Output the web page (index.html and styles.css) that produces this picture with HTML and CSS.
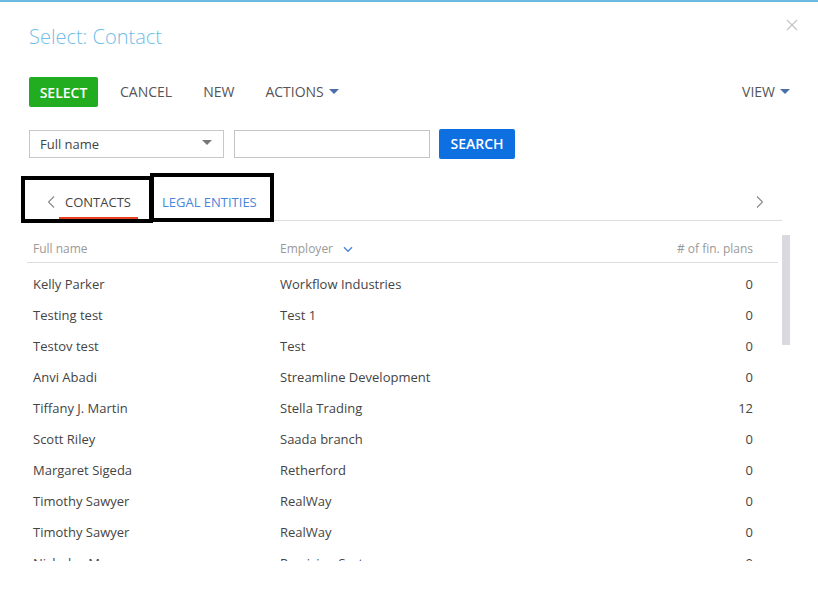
FILE: index.html
```html
<!DOCTYPE html>
<html>
<head>
<meta charset="utf-8">
<link rel="stylesheet" href="styles.css">
</head>
<body>
<div class="dialog">
  <div class="title-row">
    <h1 class="title">Select: Contact</h1>
    <svg class="close" width="12" height="12" viewBox="0 0 12 12"><path d="M1 1L11 11M11 1L1 11" stroke="#c4c4c4" stroke-width="1.2" fill="none"/></svg>
  </div>
  <div class="toolbar">
    <button class="btn-select">SELECT</button>
    <span class="tb-item">CANCEL</span>
    <span class="tb-item">NEW</span>
    <span class="tb-item">ACTIONS <span class="caret"></span></span>
    <span class="tb-spacer"></span>
    <span class="tb-item view">VIEW <span class="caret"></span></span>
  </div>
  <div class="filter">
    <div class="select-box">Full name <span class="caret gray"></span></div>
    <div class="input-box"></div>
    <button class="btn-search">SEARCH</button>
  </div>
  <div class="tabs">
    <svg class="chev" width="8" height="12" viewBox="0 0 8 12"><path d="M7 0.5L1.5 6L7 11.5" stroke="#888" stroke-width="1.1" fill="none"/></svg>
    <span class="tab active">CONTACTS</span>
    <span class="tab link">LEGAL ENTITIES</span>
    <span class="tabs-spacer"></span>
    <svg class="chev right" width="8" height="12" viewBox="0 0 8 12"><path d="M1 0.5L6.5 6L1 11.5" stroke="#888" stroke-width="1.1" fill="none"/></svg>
  </div>
  <div class="grid-wrap">
    <div class="grid">
      <div class="grid-head">
        <span class="c-name">Full name</span>
        <span class="c-emp">Employer <svg class="sort" width="10" height="7" viewBox="0 0 10 7"><path d="M1 1.2L5 5.2L9 1.2" stroke="#4a86dc" stroke-width="1.4" fill="none"/></svg></span>
        <span class="c-num">#&nbsp;of fin. plans</span>
      </div>
      <div class="grid-body">
        <div class="row"><span class="c-name">Kelly Parker</span><span class="c-emp">Workflow Industries</span><span class="c-num">0</span></div>
        <div class="row"><span class="c-name">Testing test</span><span class="c-emp">Test 1</span><span class="c-num">0</span></div>
        <div class="row"><span class="c-name">Testov test</span><span class="c-emp">Test</span><span class="c-num">0</span></div>
        <div class="row"><span class="c-name">Anvi Abadi</span><span class="c-emp">Streamline Development</span><span class="c-num">0</span></div>
        <div class="row"><span class="c-name">Tiffany J. Martin</span><span class="c-emp">Stella Trading</span><span class="c-num">12</span></div>
        <div class="row"><span class="c-name">Scott Riley</span><span class="c-emp">Saada branch</span><span class="c-num">0</span></div>
        <div class="row"><span class="c-name">Margaret Sigeda</span><span class="c-emp">Retherford</span><span class="c-num">0</span></div>
        <div class="row"><span class="c-name">Timothy Sawyer</span><span class="c-emp">RealWay</span><span class="c-num">0</span></div>
        <div class="row"><span class="c-name">Timothy Sawyer</span><span class="c-emp">RealWay</span><span class="c-num">0</span></div>
        <div class="row"><span class="c-name">Nicholas Moore</span><span class="c-emp">Precision Systems</span><span class="c-num">0</span></div>
      </div>
    </div>
    <div class="scroll"><div class="thumb"></div></div>
  </div>
</div>
<div class="mark mark-1"></div>
<div class="mark mark-2"></div>
</body>
</html>
```
FILE: styles.css
```css
* { box-sizing: border-box; }
html, body { margin: 0; padding: 0; background: #fff; }
body {
  font-family: "Open Sans", "Liberation Sans", sans-serif;
  font-size: 13px;
  color: #444;
  width: 818px;
  height: 591px;
  overflow: hidden;
  position: relative;
}
.dialog {
  border-top: 2px solid #6cb9e4;
  height: 591px;
}
.title-row {
  display: flex;
  justify-content: space-between;
  align-items: flex-start;
  padding: 22px 20px 0 29px;
  height: 75px;
}
.title {
  margin: 0;
  font-weight: 300;
  font-size: 20px;
  line-height: 26px;
  color: #6fbde8;
}
.close { margin-top: -5px; }
.toolbar {
  display: flex;
  align-items: center;
  height: 30px;
  padding: 0 28px 0 29px;
  font-size: 14px;
  color: #555;
}
.btn-select {
  background: #22ac1f;
  color: #fff;
  border: 0;
  border-radius: 2px;
  font-family: inherit;
  font-size: 14px;
  font-weight: 600;
  height: 30px;
  width: 69px;
  padding: 0;
  margin-right: 22px;
}
.tb-item { margin-right: 31px; display: flex; align-items: center; line-height: 18px; }
.tb-item.view { margin-right: 0; }
.tb-spacer { flex: 1; }
.caret {
  display: inline-block;
  width: 0; height: 0;
  border-left: 5px solid transparent;
  border-right: 5px solid transparent;
  border-top: 5px solid #4a6ea8;
  margin-left: 5px;
  margin-top: -2px;
}
.caret.gray { border-top-color: #777; margin-left: auto; }
.filter {
  display: flex;
  align-items: center;
  margin-top: 22px;
  padding-left: 29px;
  height: 29px;
}
.select-box {
  width: 195px;
  height: 28px;
  border: 1px solid #c8c8c8;
  display: flex;
  align-items: center;
  padding: 0 11px 0 10px;
  font-size: 13px;
  color: #444;
}
.input-box {
  width: 196px;
  height: 28px;
  border: 1px solid #c4c4c4;
  margin-left: 10px;
}
.btn-search {
  margin-left: 9px;
  width: 76px;
  height: 30px;
  border: 0;
  border-radius: 2px;
  background: #0d6fe0;
  color: #fff;
  font-family: inherit;
  font-size: 14px;
  font-weight: 600;
  padding: 0;
}
.tabs {
  display: flex;
  align-items: center;
  margin: 25px 36px 0 27px;
  height: 38px;
  border-bottom: 1px solid #ddd;
  position: relative;
}
.chev { margin-left: 20px; margin-right: 10px; }
.chev.right { margin: 0 18px 0 0; }
.tab { font-size: 13px; line-height: 18px; }
.tab.active { position: relative; color: #444; }
.tab.active::after {
  content: "";
  position: absolute;
  left: -6px; right: -7px;
  bottom: -8px;
  height: 2px;
  background: #e8401f;
}
.tab.link { color: #4a86dc; margin-left: 31px; }
.tabs-spacer { flex: 1; }
.grid-wrap {
  display: flex;
  padding-left: 27px;
}
.grid { width: 751px; }
.grid-head {
  display: flex;
  align-items: center;
  height: 42px;
  padding-top: 14px;
  border-bottom: 1px solid #dcdcdc;
  color: #999;
  font-size: 12px;
}
.grid-body {
  padding-top: 5px;
  height: 298px;
  overflow: hidden;
}
.row {
  display: flex;
  align-items: center;
  height: 31px;
  font-size: 13px;
  color: #444;
}
.c-name { width: 253px; padding-left: 6px; }
.c-emp { width: 300px; display: flex; align-items: center; }
.c-num { flex: 1; text-align: right; padding-right: 25px; }
.sort { margin-left: 10px; margin-top: 1px; }
.scroll { width: 8px; margin-left: 4px; }
.thumb {
  margin-top: 14px;
  height: 110px;
  background: #d9d9df;
}
.mark {
  position: absolute;
  border: 4px solid #000;
}
.mark-1 { left: 21px; top: 176px; width: 132px; height: 47px; }
.mark-2 { left: 150px; top: 173px; width: 124px; height: 49px; }
```
